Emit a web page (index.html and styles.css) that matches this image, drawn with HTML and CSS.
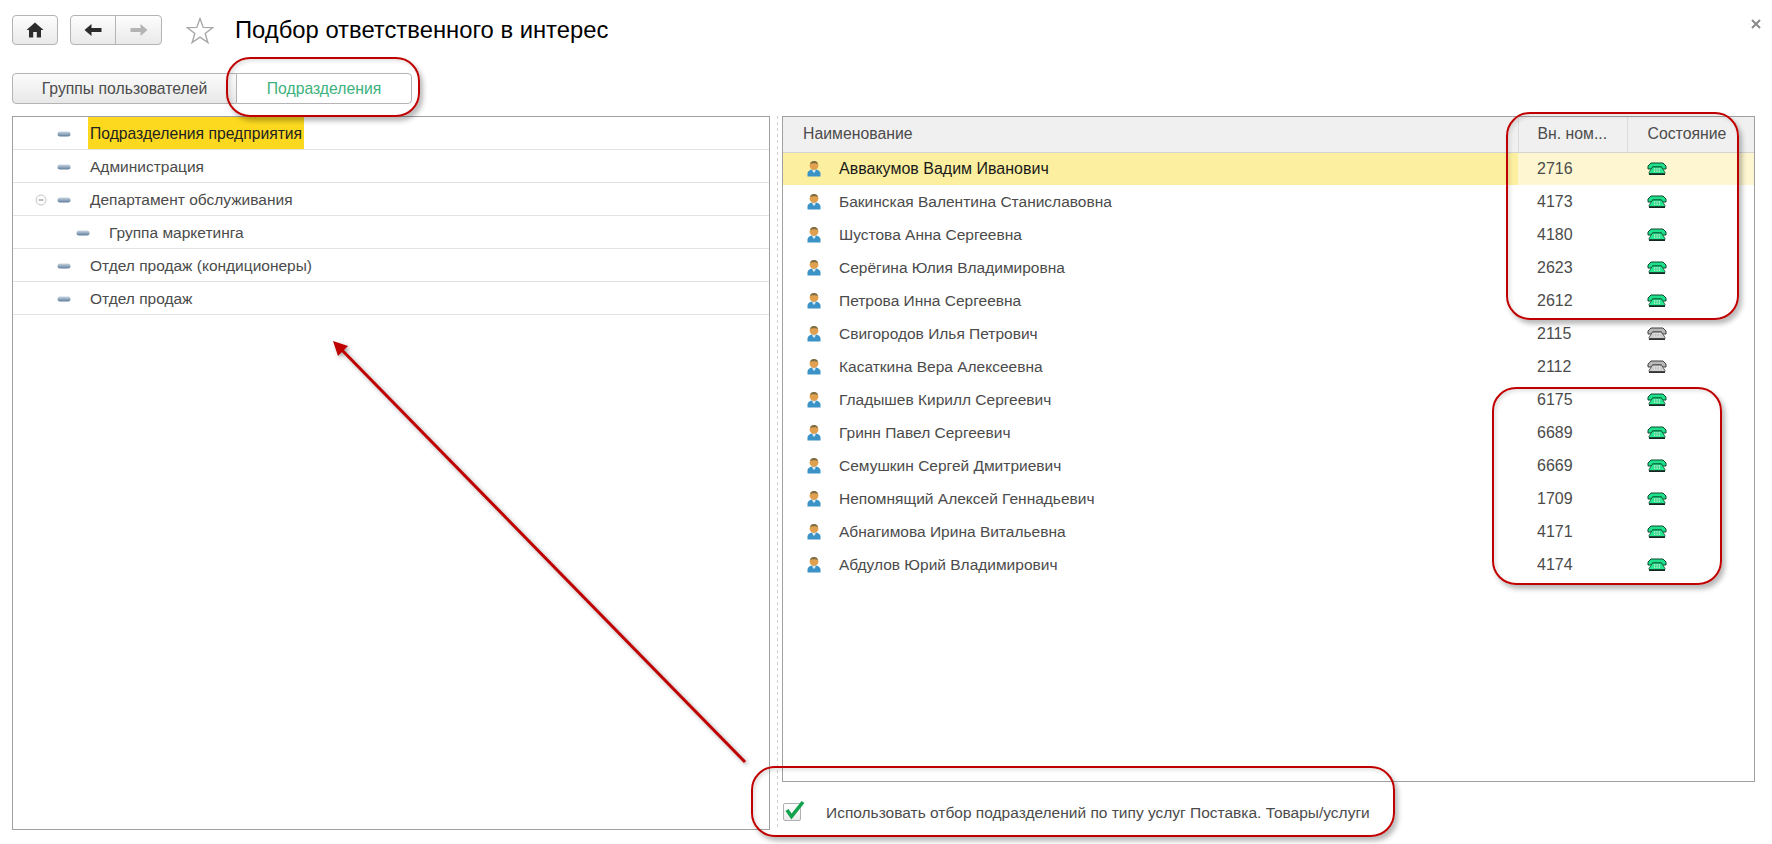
FILE: index.html
```html
<!DOCTYPE html>
<html lang="ru">
<head>
    <meta charset="UTF-8">
    <meta name="viewport" content="width=device-width, initial-scale=1.0">
    <title>Подбор ответственного в интерес</title>
    <link rel="stylesheet" href="styles.css">
</head>
<body>
    <svg class="defs" width="0" height="0">
        <defs>
            <linearGradient id="dash-fill" x1="0" y1="0" x2="0" y2="1">
                <stop offset="0" stop-color="#c9d6e2"/>
                <stop offset="1" stop-color="#5f7d9c"/>
            </linearGradient>
            <symbol id="dash" viewBox="0 0 14 6">
                <rect x="0.5" y="0.5" width="13" height="5" rx="2.5" fill="url(#dash-fill)"/>
            </symbol>
            <symbol id="person" viewBox="0 0 14 17">
                <path d="M0.5 16.5 V13.5 C0.5 11.5 2.5 10.2 4.8 9.6 H9.2 C11.5 10.2 13.5 11.5 13.5 13.5 V16.5Z" fill="#3a92c6"/>
                <path d="M5 9.6 H9 L7.8 12.5 H6.2Z" fill="#d6eaf6"/>
                <circle cx="7" cy="5.5" r="4.4" fill="#e0a050"/>
                <path d="M3 4.2 C3.4 0 10.6 0 11 4.2 C9.5 2.9 4.5 2.9 3 4.2Z" fill="#7a6c44"/>
            </symbol>
            <symbol id="phone" viewBox="0 0 20 13">
                <path d="M1 7 V4 L4 1 H16 L19 4 V7 H14.5 V5 H5.5 V7Z" fill="#1fe08a" stroke="#0a4a30"/>
                <path d="M5.5 5 H14.5 L18 10.5 V11.5 H2 V10.5Z" fill="#25e88f" stroke="#0a4a30" stroke-width="0.8"/>
                <rect x="2" y="11.5" width="16" height="1.5" fill="#14281f"/>
                <rect x="7" y="6.2" width="6" height="3.8" fill="#a8f5cc"/>
                <path d="M8.5 6.2 V10 M10 6.2 V10 M11.5 6.2 V10 M7 8.1 H13" stroke="#25c87e" stroke-width="0.6"/>
            </symbol>
            <symbol id="phone-off" viewBox="0 0 20 13">
                <path d="M1 7 V4 L4 1 H16 L19 4 V7 H14.5 V5 H5.5 V7Z" fill="#b8b8b8" stroke="#404040"/>
                <path d="M5.5 5 H14.5 L18 10.5 V11.5 H2 V10.5Z" fill="#cccccc" stroke="#404040" stroke-width="0.8"/>
                <rect x="2" y="11.5" width="16" height="1.5" fill="#303030"/>
                <rect x="7" y="6.2" width="6" height="3.8" fill="#eeeeee"/>
                <path d="M8.5 6.2 V10 M10 6.2 V10 M11.5 6.2 V10 M7 8.1 H13" stroke="#b0b0b0" stroke-width="0.6"/>
            </symbol>
        </defs>
    </svg>

    <div class="page">
        <div class="toolbar">
            <button class="btn btn-home">
                <svg width="18" height="16" viewBox="0 0 18 16"><path d="M9 0.5 L17.5 8 H15 V15.5 H10.8 V10 H7.2 V15.5 H3 V8 H0.5Z" fill="#2b2b2b"/></svg>
            </button>
            <div class="btn-group">
                <button class="btn btn-nav">
                    <svg width="18" height="14" viewBox="0 0 18 14"><path d="M0.5 7 L7.5 1 V5 H17.5 V9 H7.5 V13Z" fill="#2b2b2b"/></svg>
                </button>
                <button class="btn btn-nav">
                    <svg width="18" height="14" viewBox="0 0 18 14"><path d="M17.5 7 L10.5 1 V5 H0.5 V9 H10.5 V13Z" fill="#b4b4b4"/></svg>
                </button>
            </div>
            <svg class="star" width="28" height="27" viewBox="0 0 28 27"><path d="M14 1.5 L17.2 10.4 L26.8 10.6 L19.2 16.4 L21.9 25.6 L14 20.2 L6.1 25.6 L8.8 16.4 L1.2 10.6 L10.8 10.4Z" fill="#fff" stroke="#a8a8a8" stroke-width="1.4"/></svg>
            <h1 class="title">Подбор ответственного в интерес</h1>
            <svg class="close" width="10" height="10" viewBox="0 0 10 10"><path d="M1 1 L9 9 M9 1 L1 9" stroke="#8a8a8a" stroke-width="2"/></svg>
        </div>

        <div class="tabs">
            <div class="tab">Группы пользователей</div>
            <div class="tab tab-active">Подразделения</div>
        </div>

        <div class="content">
            <div class="tree">
                <div class="tree-row"><span class="tree-toggle"></span><svg class="dash"><use href="#dash"/></svg><span class="tree-text tree-current">Подразделения предприятия</span></div>
                <div class="tree-row"><span class="tree-toggle"></span><svg class="dash"><use href="#dash"/></svg><span class="tree-text">Администрация</span></div>
                <div class="tree-row">
                    <span class="tree-toggle">
                        <svg width="12" height="12" viewBox="0 0 12 12"><circle cx="6" cy="6" r="5" fill="#fff" stroke="#c4c4c4"/><path d="M3.5 6 H8.5" stroke="#808080"/></svg>
                    </span>
                    <svg class="dash"><use href="#dash"/></svg><span class="tree-text">Департамент обслуживания</span>
                </div>
                <div class="tree-row tree-child"><span class="tree-toggle"></span><svg class="dash"><use href="#dash"/></svg><span class="tree-text">Группа маркетинга</span></div>
                <div class="tree-row"><span class="tree-toggle"></span><svg class="dash"><use href="#dash"/></svg><span class="tree-text">Отдел продаж (кондиционеры)</span></div>
                <div class="tree-row"><span class="tree-toggle"></span><svg class="dash"><use href="#dash"/></svg><span class="tree-text">Отдел продаж</span></div>
            </div>

            <div class="splitter"></div>

            <div class="right">
                <table class="users">
                    <thead>
                        <tr>
                            <th class="col-name">Наименование</th>
                            <th class="col-num">Вн. ном...</th>
                            <th class="col-state">Состояние</th>
                        </tr>
                    </thead>
                    <tbody>
                        <tr class="selected">
                            <td class="col-name"><svg class="person"><use href="#person"/></svg>Аввакумов Вадим Иванович</td>
                            <td class="col-num">2716</td>
                            <td class="col-state"><svg class="phone"><use href="#phone"/></svg></td>
                        </tr>
                        <tr>
                            <td class="col-name"><svg class="person"><use href="#person"/></svg>Бакинская Валентина Станиславовна</td>
                            <td class="col-num">4173</td>
                            <td class="col-state"><svg class="phone"><use href="#phone"/></svg></td>
                        </tr>
                        <tr>
                            <td class="col-name"><svg class="person"><use href="#person"/></svg>Шустова Анна Сергеевна</td>
                            <td class="col-num">4180</td>
                            <td class="col-state"><svg class="phone"><use href="#phone"/></svg></td>
                        </tr>
                        <tr>
                            <td class="col-name"><svg class="person"><use href="#person"/></svg>Серёгина Юлия Владимировна</td>
                            <td class="col-num">2623</td>
                            <td class="col-state"><svg class="phone"><use href="#phone"/></svg></td>
                        </tr>
                        <tr>
                            <td class="col-name"><svg class="person"><use href="#person"/></svg>Петрова Инна Сергеевна</td>
                            <td class="col-num">2612</td>
                            <td class="col-state"><svg class="phone"><use href="#phone"/></svg></td>
                        </tr>
                        <tr>
                            <td class="col-name"><svg class="person"><use href="#person"/></svg>Свигородов Илья Петрович</td>
                            <td class="col-num">2115</td>
                            <td class="col-state"><svg class="phone"><use href="#phone-off"/></svg></td>
                        </tr>
                        <tr>
                            <td class="col-name"><svg class="person"><use href="#person"/></svg>Касаткина Вера Алексеевна</td>
                            <td class="col-num">2112</td>
                            <td class="col-state"><svg class="phone"><use href="#phone-off"/></svg></td>
                        </tr>
                        <tr>
                            <td class="col-name"><svg class="person"><use href="#person"/></svg>Гладышев Кирилл Сергеевич</td>
                            <td class="col-num">6175</td>
                            <td class="col-state"><svg class="phone"><use href="#phone"/></svg></td>
                        </tr>
                        <tr>
                            <td class="col-name"><svg class="person"><use href="#person"/></svg>Гринн Павел Сергеевич</td>
                            <td class="col-num">6689</td>
                            <td class="col-state"><svg class="phone"><use href="#phone"/></svg></td>
                        </tr>
                        <tr>
                            <td class="col-name"><svg class="person"><use href="#person"/></svg>Семушкин Сергей Дмитриевич</td>
                            <td class="col-num">6669</td>
                            <td class="col-state"><svg class="phone"><use href="#phone"/></svg></td>
                        </tr>
                        <tr>
                            <td class="col-name"><svg class="person"><use href="#person"/></svg>Непомнящий Алексей Геннадьевич</td>
                            <td class="col-num">1709</td>
                            <td class="col-state"><svg class="phone"><use href="#phone"/></svg></td>
                        </tr>
                        <tr>
                            <td class="col-name"><svg class="person"><use href="#person"/></svg>Абнагимова Ирина Витальевна</td>
                            <td class="col-num">4171</td>
                            <td class="col-state"><svg class="phone"><use href="#phone"/></svg></td>
                        </tr>
                        <tr>
                            <td class="col-name"><svg class="person"><use href="#person"/></svg>Абдулов Юрий Владимирович</td>
                            <td class="col-num">4174</td>
                            <td class="col-state"><svg class="phone"><use href="#phone"/></svg></td>
                        </tr>
                    </tbody>
                </table>
                <div class="filter">
                    <span class="checkbox">
                        <svg width="22" height="22" viewBox="0 0 22 22"><path d="M3 10 L7.5 16.5 L19 2" fill="none" stroke="#12a24e" stroke-width="3.6"/></svg>
                    </span>
                    <span class="filter-text">Использовать отбор подразделений по типу услуг Поставка. Товары/услуги</span>
                </div>
            </div>
        </div>
    </div>

    <!-- пометки поверх скриншота -->
    <div class="mark mark-tab"></div>
    <div class="mark mark-top"></div>
    <div class="mark mark-bottom"></div>
    <div class="mark mark-filter"></div>
    <svg class="arrow" width="1772" height="844" viewBox="0 0 1772 844">
        <path d="M745 762 L338 346" fill="none" stroke="#c00000" stroke-width="3"/>
        <path d="M333 341 L348 346 L338 356Z" fill="#c00000"/>
    </svg>
</body>
</html>
```

FILE: styles.css
```css
* {
    box-sizing: border-box;
}
html, body {
    margin: 0;
    height: 100%;
    overflow: hidden;
}
body {
    font-family: "Liberation Sans", Arial, sans-serif;
    font-size: 15.5px;
    color: #4b4b4b;
    background-color: #fff;
}
.defs {
    display: block;
    height: 0;
}
.page {
    width: 1772px;
    height: 844px;
    padding: 15px 17px 0 12px;
}

/* верхняя панель */
.toolbar {
    display: flex;
    align-items: center;
    height: 30px;
}
.btn {
    display: flex;
    align-items: center;
    justify-content: center;
    height: 30px;
    padding: 0;
    border: 1px solid #b4b4b4;
    border-radius: 4px;
    background: linear-gradient(#fdfdfd, #e9e9e9);
}
.btn-home {
    width: 46px;
}
.btn-group {
    display: flex;
    margin-left: 12px;
}
.btn-nav {
    width: 46px;
    border-radius: 4px 0 0 4px;
}
.btn-nav + .btn-nav {
    margin-left: -1px;
    width: 47px;
    border-radius: 0 4px 4px 0;
}
.star {
    margin-left: 24px;
}
.title {
    margin: 0 0 0 21px;
    font-size: 23.8px;
    font-weight: normal;
    color: #000;
}
.close {
    margin-left: auto;
    margin-right: -6px;
    margin-top: -12px;
}

/* вкладки */
.tabs {
    display: flex;
    margin-top: 28px;
    height: 31px;
}
.tab {
    display: flex;
    align-items: center;
    justify-content: center;
    width: 225px;
    border: 1px solid #b4b4b4;
    border-radius: 4px 0 0 4px;
    background: linear-gradient(#fbfbfb, #e8e8e8);
    font-size: 15.75px;
}
.tab-active {
    width: 176px;
    margin-left: -1px;
    border-radius: 0 4px 4px 0;
    background: #fff;
    color: #3cb27c;
}

/* дерево и таблица */
.content {
    display: flex;
    margin-top: 12px;
}
.tree {
    width: 758px;
    height: 714px;
    border: 1px solid #a0a0a0;
}
.tree-row {
    display: flex;
    align-items: center;
    height: 33px;
    padding: 2px 0 0 22px;
    border-bottom: 1px solid #e3e3e3;
}
.tree-toggle {
    display: flex;
    width: 22px;
}
.dash {
    width: 14px;
    height: 6px;
    flex: none;
}
.tree-text {
    margin-left: 16px;
    padding: 0 3px;
    white-space: nowrap;
}
.tree-child {
    padding-left: 41px;
}
.tree-current {
    align-self: stretch;
    margin: -2px 0 0 17px;
    padding: 2px 2px 0;
    line-height: 30px;
    background-color: #fcd91f;
    color: #222;
    font-size: 15.7px;
}
.splitter {
    width: 12px;
    height: 714px;
    background: repeating-linear-gradient(#cfcfcf 0 3px, transparent 3px 6px) 7px 0 / 1px 100% no-repeat;
}
.right {
    width: 973px;
}
.users {
    display: block;
    width: 973px;
    height: 666px;
    border: 1px solid #a0a0a0;
    border-collapse: collapse;
}
.users th {
    height: 35px;
    padding: 0;
    font-size: 15.8px;
    font-weight: normal;
    text-align: left;
    background-color: #f0f0f0;
    border-bottom: 1px solid #d4d4d4;
}
.users th + th {
    border-left: 1px solid #dcdcdc;
}
.users td {
    height: 33px;
    padding: 0;
    font-size: 16px;
    white-space: nowrap;
}
.col-name {
    width: 735px;
    padding-left: 20px !important;
}
.users td.col-name {
    padding-left: 24px !important;
    font-size: 15.5px;
}
.col-num {
    width: 109px;
    padding-left: 19px !important;
}
.col-state {
    width: 127px;
    padding-left: 20px !important;
}
.person {
    width: 14px;
    height: 17px;
    margin-right: 18px;
    vertical-align: -3px;
}
.phone {
    display: block;
    width: 20px;
    height: 13px;
}
.selected td {
    background-color: #fdf6d0;
    color: #1a1a1a;
}
.users .selected td.col-name {
    background-color: #fcf0a0;
    font-size: 16px;
}
.selected .col-num,
.selected .col-state {
    color: #4b4b4b;
}

/* флажок внизу */
.filter {
    display: flex;
    align-items: center;
    height: 48px;
}
.checkbox {
    position: relative;
    width: 18px;
    height: 18px;
    margin-left: 1px;
    margin-top: 12px;
    border: 1px solid #b0b0b0;
    border-radius: 2px;
    background: linear-gradient(#fff, #ececec);
}
.checkbox svg {
    position: absolute;
    left: 0;
    top: -4px;
}
.filter-text {
    margin-left: 25px;
    margin-top: 14px;
    font-size: 15.5px;
    white-space: nowrap;
}

/* красные рамки и стрелка */
.mark {
    position: absolute;
    border: 2px solid #c00000;
    border-radius: 24px;
    box-shadow: 3px 4px 5px rgba(0, 0, 0, 0.28), inset 2px 2px 4px rgba(0, 0, 0, 0.12);
}
.mark-tab {
    left: 226px;
    top: 57px;
    width: 194px;
    height: 60px;
}
.mark-top {
    left: 1506px;
    top: 112px;
    width: 233px;
    height: 208px;
}
.mark-bottom {
    left: 1492px;
    top: 387px;
    width: 230px;
    height: 198px;
}
.mark-filter {
    left: 751px;
    top: 766px;
    width: 644px;
    height: 71px;
}
.arrow {
    position: absolute;
    left: 0;
    top: 0;
    pointer-events: none;
    filter: drop-shadow(2px 2px 2px rgba(0, 0, 0, 0.35));
}
```
